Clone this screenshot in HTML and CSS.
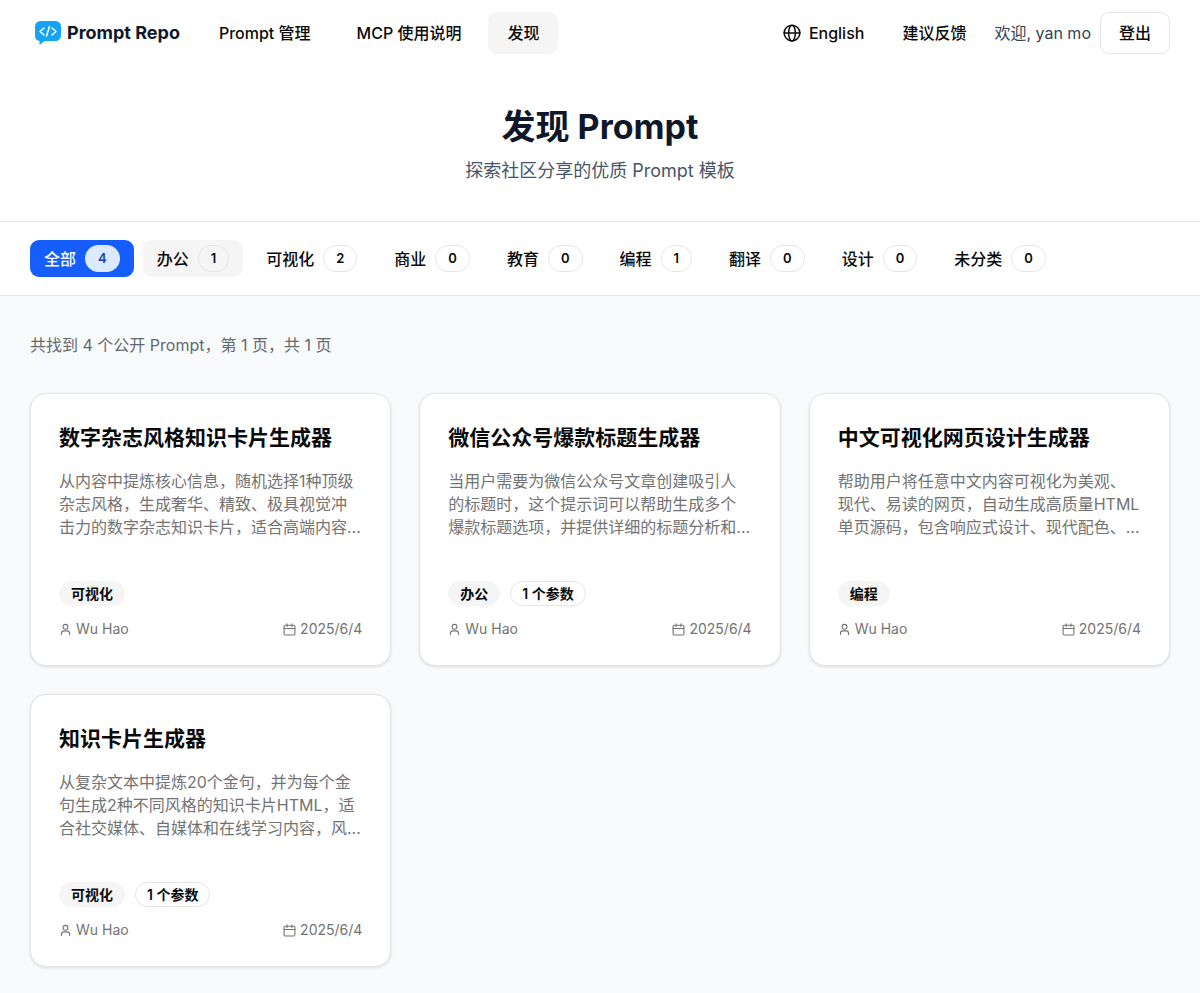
FILE: index.html
```html
<!DOCTYPE html>
<html lang="zh-CN">
<head>
  <meta charset="UTF-8" />
  <meta name="viewport" content="width=device-width, initial-scale=1.0"/>
  <title>发现 Prompt - Prompt Repo</title>
  <link rel="stylesheet" href="styles.css">
</head>
<body>
  <!-- 图标 -->
  <svg class="sprite" aria-hidden="true">
    <symbol id="icon-user" viewBox="0 0 24 24">
      <circle cx="12" cy="7" r="4.500"/>
      <path d="M19.500 21v-2a4.500 4.500 0 0 0-4.500-4.500H9a4.500 4.500 0 0 0-4.500 4.500v2"/>
    </symbol>
    <symbol id="icon-calendar" viewBox="0 0 24 24">
      <path d="M7.500 1.500v5M16.500 1.500v5M2 10h20"/>
      <rect x="2" y="4" width="20" height="18" rx="2"/>
    </symbol>
  </svg>

  <header class="header">
    <a class="logo" href="#">
      <svg class="logo-icon" viewBox="0 0 28 26" aria-hidden="true">
        <path class="logo-bubble" d="M6.500 1h15A5.500 5.500 0 0 1 27 6.500v9A5.500 5.500 0 0 1 21.500 21H10.500L5.500 25V21A5.500 5.500 0 0 1 1 15.500v-9A5.500 5.500 0 0 1 6.500 1z"/>
        <path class="logo-code" d="M10 8L6 11.500l4 3.500M18 8l4 3.500-4 3.500M15.500 6.500l-3 9.500"/>
      </svg>
      <span>Prompt Repo</span>
    </a>
    <nav class="nav">
      <a class="nav-link" href="#">Prompt 管理</a>
      <a class="nav-link" href="#">MCP 使用说明</a>
      <a class="nav-link active" href="#">发现</a>
    </nav>
    <div class="actions">
      <button class="lang" type="button">
        <svg class="globe" viewBox="0 0 24 24" aria-hidden="true">
          <circle cx="12" cy="12" r="10.500"/>
          <ellipse cx="12" cy="12" rx="4.500" ry="10.500"/>
          <path d="M1.500 12h21"/>
        </svg>
        English
      </button>
      <a class="nav-link" href="#">建议反馈</a>
      <span class="welcome">欢迎, yan mo</span>
      <button class="logout" type="button">登出</button>
    </div>
  </header>

  <section class="hero">
    <h1>发现 Prompt</h1>
    <p>探索社区分享的优质 Prompt 模板</p>
  </section>

  <!-- 分类 -->
  <div class="categories">
    <button class="category selected" type="button">全部<span class="count">4</span></button>
    <button class="category hovered" type="button">办公<span class="count">1</span></button>
    <button class="category" type="button">可视化<span class="count">2</span></button>
    <button class="category" type="button">商业<span class="count">0</span></button>
    <button class="category" type="button">教育<span class="count">0</span></button>
    <button class="category" type="button">编程<span class="count">1</span></button>
    <button class="category" type="button">翻译<span class="count">0</span></button>
    <button class="category" type="button">设计<span class="count">0</span></button>
    <button class="category" type="button">未分类<span class="count">0</span></button>
  </div>

  <main class="main">
    <p class="summary">共找到 4 个公开 Prompt，第 1 页，共 1 页</p>

    <div class="grid">
      <article class="card">
        <h2>数字杂志风格知识卡片生成器</h2>
        <p class="desc">从内容中提炼核心信息，随机选择1种顶级杂志风格，生成奢华、精致、极具视觉冲击力的数字杂志知识卡片，适合高端内容...</p>
        <div class="tags"><span class="tag">可视化</span></div>
        <div class="meta">
          <span><svg class="icon"><use href="#icon-user"/></svg>Wu Hao</span>
          <span><svg class="icon"><use href="#icon-calendar"/></svg>2025/6/4</span>
        </div>
      </article>

      <article class="card">
        <h2>微信公众号爆款标题生成器</h2>
        <p class="desc">当用户需要为微信公众号文章创建吸引人的标题时，这个提示词可以帮助生成多个爆款标题选项，并提供详细的标题分析和...</p>
        <div class="tags"><span class="tag">办公</span><span class="tag outline">1 个参数</span></div>
        <div class="meta">
          <span><svg class="icon"><use href="#icon-user"/></svg>Wu Hao</span>
          <span><svg class="icon"><use href="#icon-calendar"/></svg>2025/6/4</span>
        </div>
      </article>

      <article class="card">
        <h2>中文可视化网页设计生成器</h2>
        <p class="desc">帮助用户将任意中文内容可视化为美观、现代、易读的网页，自动生成高质量HTML单页源码，包含响应式设计、现代配色、...</p>
        <div class="tags"><span class="tag">编程</span></div>
        <div class="meta">
          <span><svg class="icon"><use href="#icon-user"/></svg>Wu Hao</span>
          <span><svg class="icon"><use href="#icon-calendar"/></svg>2025/6/4</span>
        </div>
      </article>

      <article class="card">
        <h2>知识卡片生成器</h2>
        <p class="desc">从复杂文本中提炼20个金句，并为每个金句生成2种不同风格的知识卡片HTML，适合社交媒体、自媒体和在线学习内容，风...</p>
        <div class="tags"><span class="tag">可视化</span><span class="tag outline">1 个参数</span></div>
        <div class="meta">
          <span><svg class="icon"><use href="#icon-user"/></svg>Wu Hao</span>
          <span><svg class="icon"><use href="#icon-calendar"/></svg>2025/6/4</span>
        </div>
      </article>
    </div>
  </main>
</body>
</html>
```

FILE: styles.css
```css
* {
  box-sizing: border-box;
}
body {
  margin: 0;
  min-height: 100vh;
  font-family: Inter, "Noto Sans CJK SC", sans-serif;
  font-size: 16px;
  line-height: 24px;
  color: #0a0a0a;
  background: #f8fafc;
}
h1, h2, p {
  margin: 0;
}
a {
  color: inherit;
  text-decoration: none;
}
button {
  font: inherit;
  color: inherit;
  background: none;
  border: none;
  cursor: pointer;
}
svg {
  flex-shrink: 0;
  fill: none;
  stroke: currentColor;
  stroke-width: 2;
  stroke-linecap: round;
  stroke-linejoin: round;
}
.sprite {
  display: none;
}

/* 顶部导航 */
.header {
  display: flex;
  align-items: center;
  height: 65px;
  padding: 0 30px;
  background: #fff;
  white-space: nowrap;
}
.logo {
  display: flex;
  align-items: center;
  gap: 5px;
  margin-right: 20px;
  padding-left: 4px;
  font-size: 18px;
  font-weight: 700;
  color: #0f172a;
}
.logo-icon {
  width: 28px;
  height: 26px;
}
.logo-bubble {
  fill: #15a3f5;
  stroke: none;
}
.logo-code {
  stroke: #fff;
  stroke-width: 1.5;
}
.nav {
  display: flex;
  gap: 8px;
}
.nav-link {
  padding: 9px 19px;
  border-radius: 9px;
  font-weight: 500;
}
.nav-link.active {
  background: #f5f5f5;
}
.actions {
  display: flex;
  align-items: center;
  margin-left: auto;
}
.lang {
  display: flex;
  align-items: center;
  gap: 8px;
  padding: 9px 19px;
  font-weight: 500;
}
.globe {
  width: 18px;
  height: 18px;
}
.welcome {
  margin: 0 9px;
  color: #334155;
}
.logout {
  padding: 8px 18px;
  border: 1px solid #e5e5e5;
  border-radius: 9px;
  background: #fff;
  font-weight: 500;
}

.hero {
  padding: 40px 30px 37px;
  background: #fff;
  text-align: center;
}
.hero h1 {
  font-size: 34px;
  line-height: 44px;
  font-weight: 700;
  color: #0f172a;
}
.hero p {
  margin-top: 8px;
  font-size: 18px;
  line-height: 27px;
  color: #475569;
}

/* 分类筛选 */
.categories {
  display: flex;
  flex-wrap: wrap;
  gap: 9px;
  padding: 18px 30px;
  border-top: 1px solid #e5e5e5;
  border-bottom: 1px solid #e5e5e5;
  background: #fff;
}
.category {
  display: flex;
  align-items: center;
  gap: 9px;
  height: 37px;
  padding: 0 14px;
  border-radius: 9px;
  font-weight: 500;
}
.category.selected {
  background: #155dfc;
  color: #fff;
}
.category.hovered {
  background: #f5f5f5;
}
.count {
  padding: 2px 12px;
  border: 1px solid #e5e5e5;
  border-radius: 13px;
  font-size: 13px;
  line-height: 21px;
  font-weight: 600;
  color: #0a0a0a;
}
.selected .count {
  border-color: #dbeafe;
  background: #dbeafe;
  color: #1e40af;
}

.main {
  padding: 37px 30px 26px;
}
.summary {
  margin-bottom: 36px;
  color: #64686f;
}
.grid {
  display: grid;
  grid-template-columns: repeat(3, 1fr);
  gap: 28px;
}

/* 卡片 */
.card {
  display: flex;
  flex-direction: column;
  min-height: 273px;
  padding: 28px 28px 26px;
  border: 1px solid #e5e5e5;
  border-radius: 16px;
  background: #fff;
  box-shadow: 0 1px 3px rgba(0, 0, 0, 0.12);
}
.card h2 {
  font-size: 21px;
  line-height: 32px;
  font-weight: 600;
}
.desc {
  margin: 16px 0 42px;
  line-height: 23px;
  color: #737373;
}
.tags {
  display: flex;
  gap: 10px;
  margin-top: auto;
}
.tag {
  padding: 2px 11px;
  border: 1px solid #f5f5f5;
  border-radius: 13px;
  background: #f5f5f5;
  font-size: 14px;
  line-height: 19px;
  font-weight: 600;
}
.tag.outline {
  border-color: #e5e5e5;
  background: #fff;
}
.meta {
  display: flex;
  justify-content: space-between;
  margin-top: 13px;
  font-size: 14px;
  line-height: 20px;
  color: #737373;
}
.meta span {
  display: flex;
  align-items: center;
  gap: 4px;
}
.icon {
  width: 13px;
  height: 13px;
}
```
